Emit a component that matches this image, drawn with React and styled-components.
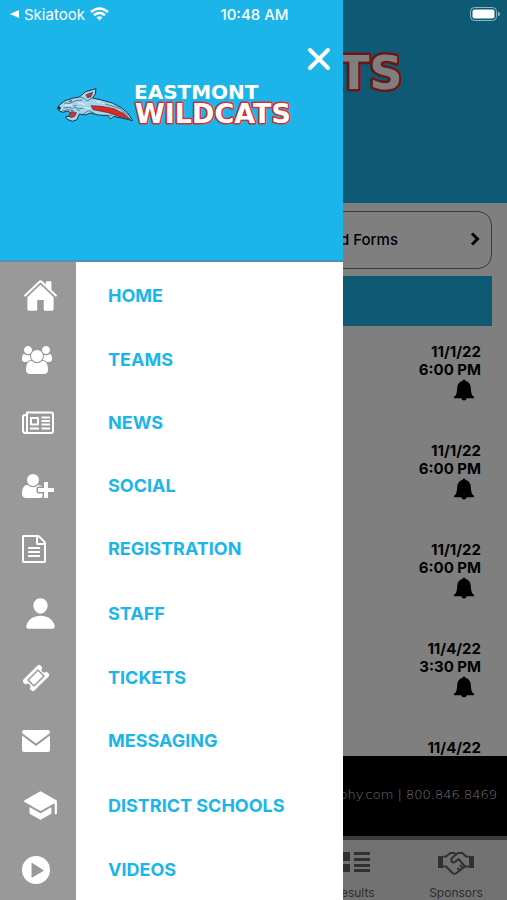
import React from "react";
import styled, { createGlobalStyle } from "styled-components";
import { IoHome, IoPerson, IoSchool } from "react-icons/io5";

const blue = "#1cb5ea";

const GlobalStyle = createGlobalStyle`
  * { box-sizing: border-box; }
  body { margin: 0; font-family: Inter, "Liberation Sans", sans-serif; }
  button { font: inherit; border: 0; padding: 0; background: none; color: inherit; cursor: pointer; }
  a { color: inherit; text-decoration: none; }
  svg { display: block; flex: none; }
`;

const Screen = styled.div`
  position: relative;
  height: 100vh;
  overflow: hidden;
`;

const StatusBar = styled.header`
  position: absolute;
  inset: 0 0 auto;
  z-index: 3;
  display: grid;
  grid-template-columns: 1fr auto 1fr;
  align-items: center;
  height: 28px;
  padding: 0 7px 0 9px;
  color: #fff;
  font-size: 15px;
  font-weight: 400;
`;

const BackApp = styled.button`
  display: flex;
  align-items: center;
  gap: 5px;
  justify-self: start;
`;

const Clock = styled.time`
  font-weight: 500;
`;

const Battery = styled.div`
  justify-self: end;
`;

const Page = styled.main`
  display: flex;
  flex-direction: column;
  height: 100%;
  background: #fff;
  color: #000;
`;

const Hero = styled.div`
  flex: none;
  height: 203px;
  padding: 20px 6px 0;
  background: ${blue};
`;

const FormsButton = styled.button`
  flex: none;
  display: flex;
  align-items: center;
  justify-content: flex-end;
  gap: 72px;
  height: 58px;
  margin: 8px 15px 7px;
  padding: 0 11px 2px;
  border: 1px solid #777;
  border-radius: 14px;
  font-size: 15px;
  font-weight: 500;
`;

const SectionBar = styled.div`
  flex: none;
  height: 50px;
  margin: 0 15px;
  background: ${blue};
`;

const EventList = styled.ul`
  flex: 1;
  min-height: 0;
  overflow: hidden;
  margin: 0;
  padding: 17px 26px 0;
  list-style: none;
`;

const EventRow = styled.li`
  display: flex;
  flex-direction: column;
  align-items: flex-end;
  height: 99px;
  font-size: 15px;
  line-height: 18px;
  font-weight: 700;
`;

const Alert = styled.button`
  margin: 0 7px;
`;

const Sponsor = styled.div`
  flex: none;
  display: flex;
  align-items: center;
  justify-content: flex-end;
  height: 80px;
  padding: 0 10px 4px;
  background: #000;
  color: #ddd;
  font-family: "DejaVu Sans", sans-serif;
  font-size: 13px;
  font-weight: 200;
  white-space: nowrap;
`;

const TabBar = styled.nav`
  flex: none;
  display: flex;
  justify-content: flex-end;
  height: 64px;
  border-top: 4px solid #777;
  background: #e4e4e4;
  color: #606060;
`;

const Tab = styled.a`
  display: flex;
  flex-direction: column;
  align-items: center;
  justify-content: space-between;
  width: 102px;
  padding-top: 12px;
  font-size: 12px;
  line-height: 14px;
`;

const Scrim = styled.div`
  position: absolute;
  inset: 0;
  z-index: 1;
  background: rgba(0, 0, 0, 0.5);
`;

const Drawer = styled.aside`
  position: absolute;
  inset: 0 164px 0 0;
  z-index: 2;
  display: flex;
  flex-direction: column;
  overflow: hidden;
  background: #fff;
`;

const DrawerHeader = styled.div`
  flex: none;
  display: flex;
  flex-direction: column;
  align-items: center;
  height: 262px;
  padding: 46px 11px 0 17px;
  border-bottom: 2px solid #4f93ad;
  background: ${blue};
`;

const CloseButton = styled.button`
  align-self: flex-end;
  margin-bottom: 10px;
  color: #fff;
`;

const Menu = styled.nav`
  flex: 1;
  background: linear-gradient(to right, #999 76px, #fff 76px);
`;

const MenuLink = styled.a`
  display: grid;
  grid-template-columns: 76px 1fr;
  align-items: center;
  height: ${(p) => (p.$tall ? 66 : 63)}px;
  color: ${blue};
  font-size: 18px;
  font-weight: 700;
`;

const IconCell = styled.span`
  padding-left: ${(p) => (p.$tall ? 23 : 22)}px;
  color: #fff;
`;

const Label = styled.span`
  padding-left: 32px;
`;

function Glyph({ box, width, height, d }) {
  return (
    <svg width={width} height={height} viewBox={box} fill="currentColor" fillRule="evenodd" aria-hidden="true">
      <path d={d} />
    </svg>
  );
}

function Newspaper() {
  return (
    <svg width="32" height="24" viewBox="0 0 32 24" fill="none" stroke="currentColor" strokeWidth="2" strokeLinejoin="round" aria-hidden="true">
      <path d="M5 1.500h24q2 0 2 2V20q0 2-2 2H3.500Q1 22 1 19.500V6q0-2 2-2h2V1.500zM5 4v15.500Q5 22 3.300 22" />
      <path d="M9 7h7v6.500H9zM19.500 6.500H28M19.500 10H28M19.500 13.500H28M8 17.500h9M19.500 17.500H28" />
    </svg>
  );
}

function Handshake() {
  return (
    <svg width="36" height="23" viewBox="0 0 36 23" fill="none" stroke="currentColor" strokeWidth="2" strokeLinejoin="round" strokeLinecap="round" aria-hidden="true">
      <path d="M0 4h5v12H0zM31 4h5v12h-5z" fill="currentColor" stroke="none" />
      <path d="M6 4.500h2L12.500 1h3.500L18 2.500 20 1h4.500L28 4.500h2M6 14.500h2L14.500 21q2 1.500 4 0L27 14.500h3" />
      <path d="M18 2.500L13.500 6.500v3q1.800 1.800 4 0L20.500 7l6.500 7.500M24 15.500l-1.500-2M21.500 18l-1.500-1.500" />
    </svg>
  );
}

const usersPath =
  "M593 896q-162 5-265 128H194q-82 0-138-40.5T0 865q0-353 124-353 6 0 43.5 21t97.5 42.5T384 597q67 0 133-23-5 37-5 66 0 139 81 256zm1071 637q0 120-73 189.5t-194 69.5H523q-121 0-194-69.5T256 1533q0-53 3.5-103.5t14-109T300 1212t43-97.5 62-81 85.5-53.5T602 960q10 0 43 21.5t73 48 107 48 135 21.5 135-21.5 107-48 73-48 43-21.5q61 0 111.5 20t85.5 53.5 62 81 43 97.5 26.5 108.500 14 109 3.500 103.500zM640 256q0 106-75 181t-181 75-181-75-75-181 75-181T384 0t181 75 75 181zm704 384q0 159-112.5 271.5T960 1024 688.5 911.5 576 640t112.5-271.5T960 256t271.5 112.5T1344 640zm576 225q0 78-56 118.5t-138 40.5h-134q-103-123-265-128 81-117 81-256 0-29-5-66 66 23 133 23 59 0 119-21.5t97.5-42.5 43.5-21q124 0 124 353zm-128-609q0 106-75 181t-181 75-181-75-75-181 75-181 181-75 181 75 75 181z";
const userPlusPath =
  "M704 896q-159 0-271.5-112.5T320 512t112.5-271.5T704 128t271.5 112.5T1088 512 975.5 783.5 704 896zM1664 1024h352q13 0 22.5 9.5t9.5 22.5v192q0 13-9.5 22.5t-22.5 9.5h-352v352q0 13-9.5 22.5t-22.5 9.5h-192q-13 0-22.5-9.5t-9.5-22.5v-352h-352q-13 0-22.5-9.5t-9.5-22.5v-192q0-13 9.5-22.5t22.5-9.5h352V672q0-13 9.5-22.5t22.5-9.5h192q13 0 22.5 9.5t9.5 22.5v352zM928 1248q0 52 38 90t90 38h256v238q-68 50-171 50H267q-121 0-194-69T0 1405q0-53 3.5-103.5t14-109T44 1084t43-97.5 62-81 85.5-53.5T346 832q19 0 39 17 79 61 154.5 91.5T704 971t164.5-30.5T1023 849q20-17 39-17 132 0 217 96h-223q-52 0-90 38t-38 90v192z";
const filePath =
  "M1468 380q28 28 48 76t20 88v1152q0 40-28 68t-68 28H96q-40 0-68-28t-28-68V96q0-40 28-68T96 0h896q40 0 88 20t76 48zm-444-244v376h376q-10-29-22-41l-313-313q-12-12-41-22zm384 1528V640H992q-40 0-68-28t-28-68V128H128v1536h1280zM384 800q0-14 9-23t23-9h704q14 0 23 9t9 23v64q0 14-9 23t-23 9H416q-14 0-23-9t-9-23v-64zm736 224q14 0 23 9t9 23v64q0 14-9 23t-23 9H416q-14 0-23-9t-9-23v-64q0-14 9-23t23-9h704zm0 256q14 0 23 9t9 23v64q0 14-9 23t-23 9H416q-14 0-23-9t-9-23v-64q0-14 9-23t23-9h704z";
const ticketPath =
  "M1024 452l316 316-572 572-316-316zm-211 979l618-618q19-19 19-45t-19-45l-362-362q-18-18-45-18t-45 18L361 979q-19 19-19 45t19 45l362 362q18 18 45 18t45-18zm889-637l-907 908q-37 37-90.5 37t-90.5-37l-126-126q56-56 56-136t-56-136-136-56-136 56L91 1178q-37-37-37-90.5T91 997L998 91q37-37 90.5-37t90.5 37l125 125q-56 56-56 136t56 136 136 56 136-56l126 125q37 37 37 90.5t-37 90.5z";
const mailPath =
  "M2 0h24q2 0 2 2v1L14 13.500 0 3V2q0-2 2-2zM0 5.500L14 16 28 5.500V20q0 2-2 2H2q-2 0-2-2z";
const playPath =
  "M14 0a14 14 0 1 0 0 28a14 14 0 1 0 0-28zM9.500 7.500v13.500q0 .8.8.4l11-6.500q.7-.5 0-1l-11-6.800q-.8-.4-.8.4z";
const bellPath =
  "M10 0q1.500 0 1.600 1.500q4.700 1.200 5.200 6.500q.2 5.500 1.300 7.500q.6 1 1.900 1.600v1.700h-7.300q-.5 2.200-2.700 2.200t-2.700-2.200H0v-1.700q1.300-.6 1.900-1.600q1.100-2 1.300-7.500q.5-5.300 5.200-6.500Q8.500 0 10 0z";

const menu = [
  { label: "HOME", tall: true, icon: <IoHome size={35} /> },
  { label: "TEAMS", icon: <Glyph box="0 0 1920 1792" width={30} height={28} d={usersPath} /> },
  { label: "NEWS", icon: <Newspaper /> },
  { label: "SOCIAL", icon: <Glyph box="0 0 2048 1792" width={32} height={28} d={userPlusPath} /> },
  { label: "REGISTRATION", icon: <Glyph box="0 0 1536 1792" width={24} height={28} d={filePath} /> },
  { label: "STAFF", tall: true, icon: <IoPerson size={35} /> },
  { label: "TICKETS", icon: <Glyph box="0 0 1792 1792" width={28} height={28} d={ticketPath} /> },
  { label: "MESSAGING", icon: <Glyph box="0 0 28 22" width={28} height={22} d={mailPath} /> },
  { label: "DISTRICT SCHOOLS", tall: true, icon: <IoSchool size={35} /> },
  { label: "VIDEOS", icon: <Glyph box="0 0 28 28" width={28} height={28} d={playPath} /> },
];

const events = [
  { date: "11/1/22", time: "6:00 PM" },
  { date: "11/1/22", time: "6:00 PM" },
  { date: "11/1/22", time: "6:00 PM" },
  { date: "11/4/22", time: "3:30 PM" },
  { date: "11/4/22", time: "6:00 PM" },
];

function Logo({ width, school }) {
  return (
    <svg width={width} viewBox="0 0 236 44" role="img" aria-label="Eastmont Wildcats">
      <g transform="scale(.3333) translate(-36 -21)" strokeLinejoin="round" strokeLinecap="round">
        <path
          d="M37 100L42 91L60 77L82 70L103 66L122 50L153 41L151 57L142 69L166 74L202 84L230 99L248 114L263 137L234 130L206 124L198 131L187 122L160 120L136 114L121 120L103 117L96 134L82 139L65 132L62 125L76 124L78 114L68 108L54 112L43 108Z"
          fill="#a9d5ec"
          stroke="#17364c"
          strokeWidth="3"
        />
        <path d="M139 92L170 94L207 101L237 116L256 133L224 125L190 113L145 104Z" fill="#e3271d" stroke="#27364a" strokeWidth="2" />
        <path d="M124 59L143 52L137 66L128 68Z" fill="#cf302b" stroke="#17364c" strokeWidth="2" />
        <path d="M72 119L80 110L94 113L90 123L79 128Z" fill="#dc3029" stroke="#17364c" strokeWidth="2" />
        <path d="M69 79L82 75L78 82Z" fill="#8f3038" />
        <path d="M37 99L42 93L48 98L44 106Z" fill="#152534" />
        <path
          d="M58 84L76 85L92 77L112 75M56 99L71 97L83 101M87 97L103 101L117 99M105 66L116 69L126 78L142 69M112 119L130 107L149 115M166 82L193 91L222 99L248 120M178 121L200 121M52 108L68 104L86 108"
          fill="none"
          stroke="#284e61"
          strokeWidth="2"
        />
        <path d="M82 91L98 89L90 95ZM92 103L108 105L101 109Z" fill="#4c9fa4" />
        <path d="M62 91L80 90M101 84L119 88M116 97L134 101M155 79L180 87" fill="none" stroke="#e4f5fb" strokeWidth="3" />
      </g>
      <g fill="#fff" fontFamily="'DejaVu Sans', sans-serif" fontWeight="700">
        {school && (
          <text x="77" y="17" fontSize="20">
            {school}
          </text>
        )}
        <text x="78" y="41" fontSize="27" stroke="#d92c2c" strokeWidth="3" paintOrder="stroke" strokeLinejoin="round">
          WILDCATS
        </text>
      </g>
    </svg>
  );
}

export default function App() {
  return (
    <Screen>
      <GlobalStyle />
      <StatusBar>
        <BackApp>
          <svg width="10" height="10" viewBox="0 0 10 10" fill="currentColor" aria-hidden="true">
            <path d="M10 1v8L1 5z" />
          </svg>
          Skiatook
          <svg width="19" height="14" viewBox="0 0 19 14" fill="none" stroke="currentColor" strokeWidth="2.6" aria-label="Wi-Fi">
            <path d="M1 5Q9.500-2 18 5M4 8.300Q9.500 3.500 15 8.300" />
            <path d="M6.500 10.400Q9.500 8 12.500 10.400L9.500 13.500z" fill="currentColor" stroke="none" />
          </svg>
        </BackApp>
        <Clock>10:48 AM</Clock>
        <Battery>
          <svg width="30" height="14" viewBox="0 0 30 14" aria-label="Battery full">
            <rect x=".5" y=".5" width="26" height="13" rx="4" fill="none" stroke="#8db7c8" />
            <rect x="2.500" y="2.500" width="22" height="9" rx="2" fill="#fff" />
            <path d="M28 4.500q2 .7 2 2.500t-2 2.500z" fill="#8db7c8" />
          </svg>
        </Battery>
      </StatusBar>

      <Page>
        <Hero>
          <Logo width={400} />
        </Hero>
        <FormsButton>
          and Forms
          <svg width="10" height="14" viewBox="0 0 10 14" fill="none" stroke="currentColor" strokeWidth="3" aria-hidden="true">
            <path d="M2 1.500L7.500 7 2 12.500" />
          </svg>
        </FormsButton>
        <SectionBar />
        <EventList>
          {events.map((event, index) => (
            <EventRow key={index}>
              <span>{event.date}</span>
              <span>{event.time}</span>
              <Alert aria-label="Set reminder">
                <Glyph box="0 0 20 21" width={20} height={22} d={bellPath} />
              </Alert>
            </EventRow>
          ))}
        </EventList>
        <Sponsor>photography.com | 800.846.8469</Sponsor>
        <TabBar>
          <Tab href="#results">
            <svg width="32" height="20" viewBox="0 0 32 20" fill="currentColor" aria-hidden="true">
              <path d="M0 0h12v9H0zM16 0h16v3H16zM16 6h16v3H16zM0 12h12v8H0zM16 12h16v3H16zM16 17h16v3H16z" />
            </svg>
            Results
          </Tab>
          <Tab href="#sponsors">
            <Handshake />
            Sponsors
          </Tab>
        </TabBar>
      </Page>

      <Scrim />

      <Drawer>
        <DrawerHeader>
          <CloseButton aria-label="Close menu">
            <svg width="26" height="26" viewBox="0 0 26 26" stroke="currentColor" strokeWidth="4" strokeLinecap="round" aria-hidden="true">
              <path d="M4 4l18 18M22 4L4 22" />
            </svg>
          </CloseButton>
          <Logo width={236} school="EASTMONT" />
        </DrawerHeader>
        <Menu>
          {menu.map((item) => (
            <MenuLink key={item.label} href="#menu" $tall={item.tall}>
              <IconCell $tall={item.tall}>{item.icon}</IconCell>
              <Label>{item.label}</Label>
            </MenuLink>
          ))}
        </Menu>
      </Drawer>
    </Screen>
  );
}
